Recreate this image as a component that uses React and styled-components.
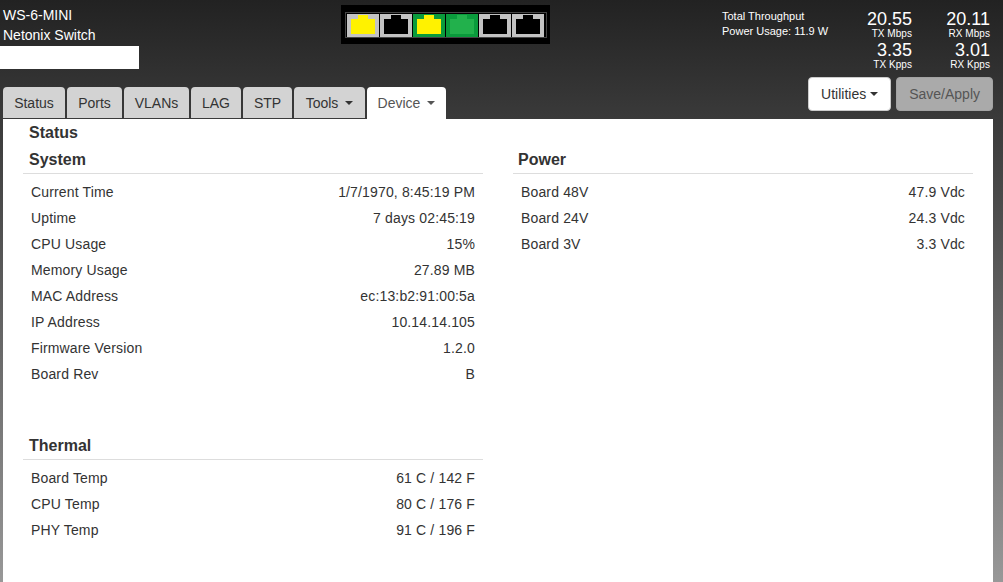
import { createGlobalStyle } from 'styled-components';
import styled from 'styled-components';

const GlobalStyle = createGlobalStyle`
  html, body, #root {
    height: 100%;
    margin: 0;
  }
  body {
    font-family: "Liberation Sans", Arial, sans-serif;
    font-size: 14px;
    color: #333;
    overflow: hidden;
  }
`;

const Page = styled.div`
  height: 100%;
  display: flex;
  flex-direction: column;
  background: linear-gradient(to bottom, #222 0%, #989898 100%);
`;

const Header = styled.header`
  display: grid;
  grid-template-columns: 341px 209px 1fr;
  grid-template-rows: 77px 42px;
  height: 119px;
  box-sizing: border-box;
`;

const Brand = styled.div`
  color: #fff;
  padding-top: 5px;
  line-height: 20px;
`;

const BrandName = styled.div`
  padding-left: 3px;
`;

const NameBox = styled.div`
  width: 139px;
  height: 23px;
  margin-top: 1px;
  background: #fff;
`;

const PortPanel = styled.div`
  width: 209px;
  height: 39px;
  margin-top: 5px;
  box-sizing: border-box;
  padding-top: 7px;
  background: #000;
  display: flex;
  justify-content: center;
`;

const PortRow = styled.div`
  display: flex;
  height: 26px;
  box-sizing: border-box;
  padding: 1px;
  border: 1px solid #444;
`;

const PortFrame = styled.svg`
  display: block;
  width: 33px;
  height: 23px;
`;

const Stats = styled.div`
  display: flex;
  color: #fff;
  padding: 10px 13px 0 0;
  justify-content: flex-end;
`;

const Summary = styled.div`
  flex: 1;
  margin-top: -1px;
  padding-left: 172px;
  font-size: 11px;
  line-height: 15px;
  white-space: nowrap;
`;

const StatGrid = styled.div`
  display: grid;
  grid-template-columns: 78px 78px;
  grid-auto-rows: 31px;
  text-align: right;
`;

const StatCell = styled.div`
  line-height: 14px;
`;

const StatValue = styled.div`
  font-size: 18px;
  line-height: 18px;
`;

const StatLabel = styled.div`
  font-size: 10px;
  line-height: 11px;
  letter-spacing: 0.05px;
`;

const Tabs = styled.nav`
  grid-column: 1 / 3;
  display: flex;
  gap: 2px;
  align-self: end;
  padding-left: 3px;
`;

const Tab = styled.div`
  box-sizing: border-box;
  width: ${(p) => p.$width}px;
  height: ${(p) => (p.$active ? 32 : 31)}px;
  display: flex;
  align-items: center;
  justify-content: center;
  gap: 7px;
  background: ${(p) => (p.$active ? '#fff' : '#d3d3d3')};
  color: ${(p) => (p.$active ? '#555' : '#333')};
  border-radius: 4px 4px 0 0;
`;

const Caret = styled.span`
  display: inline-block;
  width: 0;
  height: 0;
  border-top: 4px solid currentColor;
  border-left: 4px solid transparent;
  border-right: 4px solid transparent;
`;

const Actions = styled.div`
  display: flex;
  justify-content: flex-end;
  gap: 5px;
  padding-right: 10px;
`;

const ActionButton = styled.div`
  box-sizing: border-box;
  height: 34px;
  padding: 0 12px;
  display: flex;
  align-items: center;
  gap: 4px;
  border: 1px solid ${(p) => (p.$disabled ? '#a3a3a3' : '#ccc')};
  border-radius: 4px;
  background: ${(p) => (p.$disabled ? '#aaa' : '#fff')};
  color: ${(p) => (p.$disabled ? '#555' : '#333')};
`;

const Panel = styled.main`
  flex: 1;
  margin: 0 10px 0 3px;
  padding: 5px 20px 0;
  background: #fff;
`;

const PanelTitle = styled.h1`
  margin: 0 0 0 6px;
  font-size: 16px;
  line-height: 17px;
  color: #333;
`;

const Columns = styled.div`
  display: grid;
  grid-template-columns: 460px 460px;
  gap: 30px;
`;

const Section = styled.section`
  margin-top: ${(p) => p.$top || 0}px;
`;

const SectionTitle = styled.h2`
  margin: 0;
  padding: 10px 6px 4px ${(p) => p.$inset}px;
  font-size: 16px;
  line-height: 18px;
  color: #333;
  border-bottom: 1px solid #ddd;
`;

const Rows = styled.div`
  padding-top: 5px;
`;

const Row = styled.div`
  height: 26px;
  padding: 0 8px;
  display: flex;
  justify-content: space-between;
  align-items: center;
  letter-spacing: 0.15px;
`;

const ports = [
  { frame: '#c3c3c3', hole: '#fff200' },
  { frame: '#c3c3c3', hole: '#000' },
  { frame: '#0a9b3c', hole: '#fff200' },
  { frame: '#0a9b3c', hole: '#22b14c' },
  { frame: '#c3c3c3', hole: '#000' },
  { frame: '#c3c3c3', hole: '#000' },
];

const stats = [
  ['20.55', 'TX Mbps'],
  ['20.11', 'RX Mbps'],
  ['3.35', 'TX Kpps'],
  ['3.01', 'RX Kpps'],
];

const system = [
  ['Current Time', '1/7/1970, 8:45:19 PM'],
  ['Uptime', '7 days 02:45:19'],
  ['CPU Usage', '15%'],
  ['Memory Usage', '27.89 MB'],
  ['MAC Address', 'ec:13:b2:91:00:5a'],
  ['IP Address', '10.14.14.105'],
  ['Firmware Version', '1.2.0'],
  ['Board Rev', 'B'],
];

const thermal = [
  ['Board Temp', '61 C / 142 F'],
  ['CPU Temp', '80 C / 176 F'],
  ['PHY Temp', '91 C / 196 F'],
];

const power = [
  ['Board 48V', '47.9 Vdc'],
  ['Board 24V', '24.3 Vdc'],
  ['Board 3V', '3.3 Vdc'],
];

function Port({ frame, hole }) {
  return (
    <PortFrame viewBox="0 0 33 23">
      <rect x="0" y="0" width="32" height="23" fill={frame} />
      <path d="M4 5H11V1H21V5H28V20H4Z" fill={hole} />
    </PortFrame>
  );
}

function DataSection({ title, rows, top, inset = 6 }) {
  return (
    <Section $top={top}>
      <SectionTitle $inset={inset}>{title}</SectionTitle>
      <Rows>
        {rows.map(([label, value]) => (
          <Row key={label}>
            <span>{label}</span>
            <span>{value}</span>
          </Row>
        ))}
      </Rows>
    </Section>
  );
}

export default function App() {
  return (
    <Page>
      <GlobalStyle />
      <Header>
        <Brand>
          <BrandName>WS-6-MINI</BrandName>
          <BrandName>Netonix Switch</BrandName>
          <NameBox />
        </Brand>
        <PortPanel>
          <PortRow>
            {ports.map((port, i) => (
              <Port key={i} {...port} />
            ))}
          </PortRow>
        </PortPanel>
        <Stats>
          <Summary>
            <div>Total Throughput</div>
            <div>Power Usage: 11.9 W</div>
          </Summary>
          <StatGrid>
            {stats.map(([value, label]) => (
              <StatCell key={label}>
                <StatValue>{value}</StatValue>
                <StatLabel>{label}</StatLabel>
              </StatCell>
            ))}
          </StatGrid>
        </Stats>
        <Tabs>
          <Tab $width={62}>Status</Tab>
          <Tab $width={55}>Ports</Tab>
          <Tab $width={65}>VLANs</Tab>
          <Tab $width={50}>LAG</Tab>
          <Tab $width={49}>STP</Tab>
          <Tab $width={71}>
            Tools <Caret />
          </Tab>
          <Tab $width={79} $active>
            Device <Caret />
          </Tab>
        </Tabs>
        <Actions>
          <ActionButton>
            Utilities <Caret />
          </ActionButton>
          <ActionButton $disabled>Save/Apply</ActionButton>
        </Actions>
      </Header>
      <Panel>
        <PanelTitle>Status</PanelTitle>
        <Columns>
          <div>
            <DataSection title="System" rows={system} />
            <DataSection title="Thermal" rows={thermal} top={40} />
          </div>
          <div>
            <DataSection title="Power" rows={power} inset={5} />
          </div>
        </Columns>
      </Panel>
    </Page>
  );
}
